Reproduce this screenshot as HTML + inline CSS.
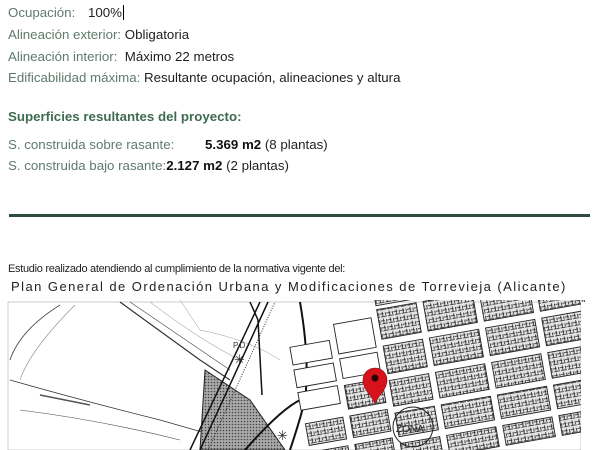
<!DOCTYPE html>
<html><head><meta charset="utf-8"><style>
html,body{margin:0;padding:0;background:#fff;width:600px;height:450px;overflow:hidden}
body{position:relative;font-family:"Liberation Sans",sans-serif}
.t{position:absolute;left:8px;font-size:13.3px;color:#222;white-space:nowrap}
.l{color:#607a6c}
.h{color:#3f6b4f;font-weight:bold}
b{color:#111}
svg{display:block;overflow:hidden}
</style></head><body>
<div class="t" style="top:5px"><span class="l">Ocupación:</span></div>
<div class="t" style="top:5px;left:88px">100%<span style="border-left:1px solid #000;margin-left:1px"></span></div>
<div class="t" style="top:27px"><span class="l">Alineación exterior:</span> Obligatoria</div>
<div class="t" style="top:49px"><span class="l">Alineación interior:</span>&nbsp; Máximo 22 metros</div>
<div class="t" style="top:70px"><span class="l">Edificabilidad máxima:</span> Resultante ocupación, alineaciones y altura</div>
<div class="t h" style="top:109px">Superficies resultantes del proyecto:</div>
<div class="t" style="top:137px"><span class="l">S. construida sobre rasante:</span></div>
<div class="t" style="top:137px;left:205px"><b>5.369 m2</b> (8 plantas)</div>
<div class="t" style="top:158px"><span class="l">S. construida bajo rasante:</span><b>2.127 m2</b> (2 plantas)</div>
<div style="position:absolute;left:9px;top:214px;width:581px;height:3px;background:#2f4d3c"></div>
<div class="t" style="top:263px;font-size:11px;letter-spacing:-0.3px">Estudio realizado atendiendo al cumplimiento de la normativa vigente del:</div>
<div class="t" style="top:279px;font-size:13px;letter-spacing:1.45px;left:11px">Plan General de Ordenación Urbana y Modificaciones de Torrevieja (Alicante)</div>
<svg style="position:absolute;left:0;top:300px" width="600" height="150" viewBox="0 300 600 150">
<defs>
<pattern id="hp" width="3" height="3" patternUnits="userSpaceOnUse"><rect width="3" height="3" fill="#aaa"/><circle cx="1.5" cy="1.5" r="0.8" fill="#444"/></pattern>
<pattern id="bk" width="7" height="7" patternUnits="userSpaceOnUse"><rect width="7" height="7" fill="#e4e4e4"/><path d="M0 2h4M3 0v5M1 5h6M6 1v3" stroke="#222" stroke-width="0.8"/></pattern>
</defs>
<rect x="8" y="302" width="573" height="148" fill="#fff" stroke="#999" stroke-width="0.5"/>
<path d="M60 305 Q20 330 10 360" stroke="#555" fill="none"/>
<path d="M75 305 Q30 350 20 380" stroke="#888" fill="none" stroke-width="0.6"/>
<path d="M120 302 L200 360 L230 380" stroke="#333" fill="none" stroke-width="1.2"/>
<path d="M130 302 L230 370" stroke="#444" fill="none" stroke-width="0.6"/>
<path d="M150 302 Q200 340 240 360" stroke="#888" fill="none" stroke-width="0.5"/>
<path d="M10 380 Q80 400 160 420 L230 440" stroke="#333" fill="none" stroke-width="0.8"/>
<path d="M20 410 Q100 420 180 440" stroke="#444" fill="none" stroke-width="0.6"/>
<path d="M40 395 L90 405" stroke="#555" stroke-width="1.5"/>
<path d="M180 300 L200 330 Q250 340 280 360" stroke="#999" fill="none" stroke-width="0.5"/>
<path d="M205 370 L250 400 L285 450 L200 450 Z" fill="url(#hp)" stroke="#222"/>
<path d="M190 450 L260 302 M200 450 L268 302" stroke="#111" stroke-width="1.5"/>
<path d="M208 450 L275 302" stroke="#333" stroke-width="1" stroke-dasharray="1,1.5"/>
<path d="M245 450 Q280 410 300 400 L315 395" stroke="#111" stroke-width="2" fill="none"/>
<path d="M250 302 L258 320 L262 395" stroke="#111" fill="none" stroke-width="1.5"/>
<path d="M300 302 Q310 360 305 400 Q300 420 290 450" stroke="#111" fill="none" stroke-width="2"/>
<text x="233" y="348" font-size="8" fill="#333" font-family="Liberation Sans,sans-serif">P.D.</text>
<text x="234" y="364" font-size="13" fill="#222" font-family="Liberation Sans,sans-serif">✳</text>
<text x="277" y="440" font-size="13" fill="#222" font-family="Liberation Sans,sans-serif">✳</text>
<g transform="rotate(-10 450 380)" stroke="#222" stroke-width="0.9">
<g fill="#fff">
<rect x="298" y="320" width="40" height="18"/><rect x="298" y="343" width="40" height="18"/><rect x="298" y="366" width="40" height="18"/>
<rect x="345" y="305" width="38" height="30"/><rect x="345" y="340" width="38" height="20"/>
</g>
<g fill="url(#bk)">
<rect x="390" y="270" width="40" height="24"/><rect x="437" y="270" width="50" height="24"/><rect x="494" y="270" width="50" height="24"/><rect x="551" y="270" width="45" height="24"/>
<rect x="390" y="298" width="40" height="30"/><rect x="437" y="298" width="50" height="30"/><rect x="494" y="298" width="50" height="30"/><rect x="551" y="298" width="45" height="30"/>
<rect x="390" y="335" width="40" height="28"/><rect x="437" y="335" width="50" height="28"/><rect x="494" y="335" width="50" height="28"/><rect x="551" y="335" width="45" height="28"/>
<rect x="345" y="367" width="38" height="24"/><rect x="390" y="370" width="40" height="26"/><rect x="437" y="370" width="50" height="26"/><rect x="494" y="370" width="50" height="26"/><rect x="551" y="370" width="45" height="26"/>
<rect x="300" y="398" width="38" height="22"/><rect x="345" y="398" width="38" height="22"/><rect x="390" y="403" width="40" height="24"/><rect x="437" y="403" width="50" height="24"/><rect x="494" y="403" width="50" height="24"/><rect x="551" y="403" width="45" height="24"/>
<rect x="300" y="427" width="38" height="20"/><rect x="345" y="427" width="38" height="20"/><rect x="390" y="434" width="40" height="20"/><rect x="437" y="434" width="50" height="20"/><rect x="494" y="434" width="50" height="20"/><rect x="551" y="434" width="45" height="20"/>
</g></g>
<rect x="581" y="302" width="19" height="148" fill="#fff"/>
<circle cx="413" cy="427" r="20" fill="none" stroke="#222"/>
<text x="396" y="432" font-size="10" fill="#222" font-family="Liberation Sans,sans-serif">ZONA</text>
<path d="M375 404 C372 395 363 390 363 380 A12 12 0 0 1 387 380 C387 390 378 395 375 404 Z" fill="#d8121b" stroke="#8a0a10" stroke-width="0.6"/>
<circle cx="375" cy="378" r="3.5" fill="#2a0003"/>
</svg>
</body></html>
